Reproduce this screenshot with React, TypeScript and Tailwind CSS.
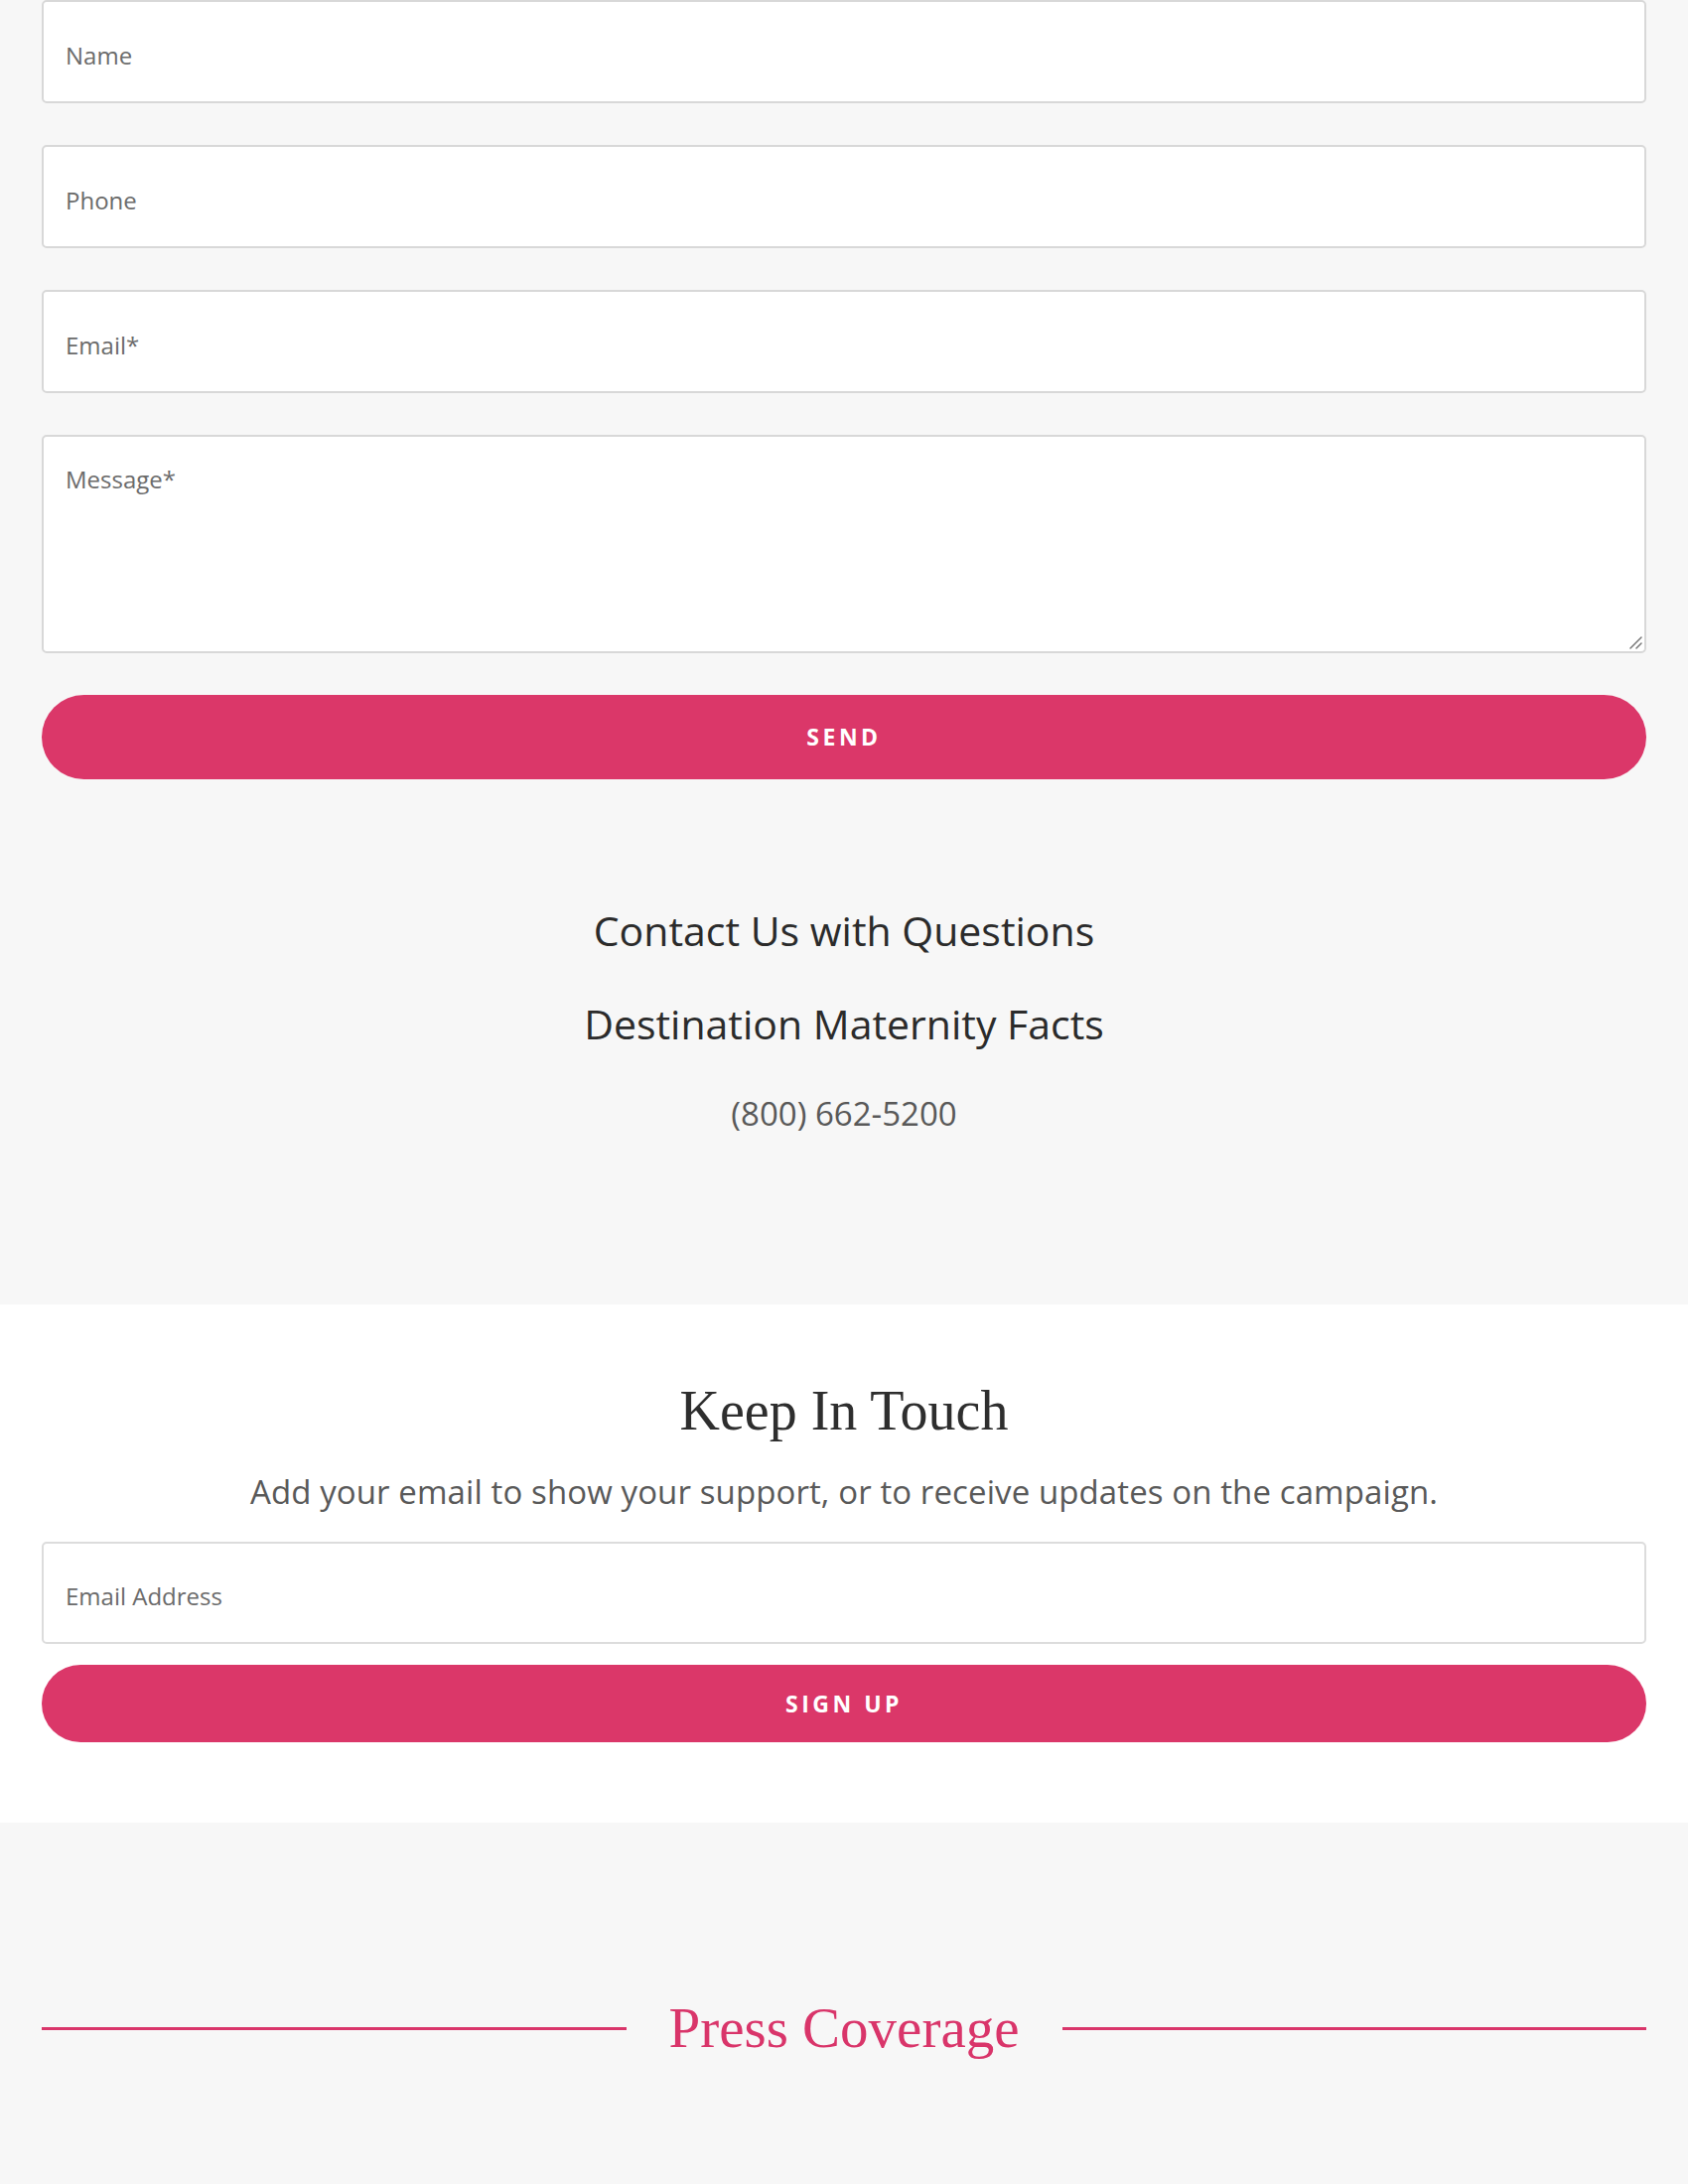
import React from "react";

const field =
  "w-full h-[104px] rounded-[5px] border-2 border-[#d8d8d8] bg-white px-[22px] pt-[6px] text-[24px] text-[#333] placeholder:text-[#6b6b6b] outline-none";

function ContactForm() {
  return (
    <form className="flex flex-col gap-[42px]" onSubmit={(e) => e.preventDefault()}>
      <input className={field} placeholder="Name" />
      <input className={field} placeholder="Phone" />
      <input className={field} placeholder="Email*" />
      <div className="relative">
        <textarea
          className="w-full h-[220px] rounded-[5px] border-2 border-[#d8d8d8] bg-white px-[22px] pt-[25px] text-[24px] leading-[36px] text-[#333] placeholder:text-[#6b6b6b] outline-none block resize-none"
          placeholder="Message*"
        />
        {/* resize grip */}
        <svg className="absolute right-[4px] bottom-[4px] w-[14px] h-[14px]" viewBox="0 0 14 14">
          <path d="M2 13 L13 2 M8 13 L13 8" stroke="#777" strokeWidth="1.5" strokeLinecap="round" />
        </svg>
      </div>
      <button className="w-full h-[85px] rounded-full bg-[#db3769] text-white text-[23px] font-bold tracking-[3.5px] uppercase">
        Send
      </button>
    </form>
  );
}

export default function App() {
  return (
    <div className="w-[1700px] font-['Open_Sans',sans-serif]">
      <section className="bg-[#f7f7f7] px-[42px] pb-[169px]">
        <ContactForm />
        <div className="flex flex-col items-center">
          <h3 className="mt-[124px] text-[41px] leading-[56px] text-[#2b2b2b]">Contact Us with Questions</h3>
          <h3 className="mt-[38px] text-[41px] leading-[56px] text-[#2b2b2b]">Destination Maternity Facts</h3>
          <p className="mt-[40px] text-[33px] leading-[46px] text-[#595959]">(800) 662-5200</p>
        </div>
      </section>

      <section className="bg-white px-[42px] pt-[75px] pb-[81px]">
        <h2 className="text-center font-['Liberation_Serif',serif] text-[56px] leading-[64px] text-[#2e2e2e]">
          Keep In Touch
        </h2>
        <p className="mt-[27px] text-center text-[33px] leading-[46px] tracking-[0.1px] text-[#595959]">
          Add your email to show your support, or to receive updates on the campaign.
        </p>
        <form className="mt-[27px] flex flex-col gap-[21px]" onSubmit={(e) => e.preventDefault()}>
          <input
            className="w-full h-[103px] rounded-[5px] border-2 border-[#dcdcdc] bg-white px-[22px] pt-[6px] text-[24px] text-[#333] placeholder:text-[#6b6b6b] outline-none"
            placeholder="Email Address"
          />
          <button className="w-full h-[78px] rounded-full bg-[#db3769] text-white text-[23px] font-bold tracking-[3.5px] uppercase">
            Sign Up
          </button>
        </form>
      </section>

      <section className="bg-[#f7f7f7] px-[42px] pt-[175px] pb-[200px]">
        <div className="flex items-center gap-[43px]">
          <div className="flex-1 h-[3px] bg-[#d9356a]" />
          <h2 className="font-['Liberation_Serif',serif] text-[57px] leading-[64px] text-[#d9356a]">Press Coverage</h2>
          <div className="flex-1 h-[3px] bg-[#d9356a]" />
        </div>
      </section>
    </div>
  );
}
